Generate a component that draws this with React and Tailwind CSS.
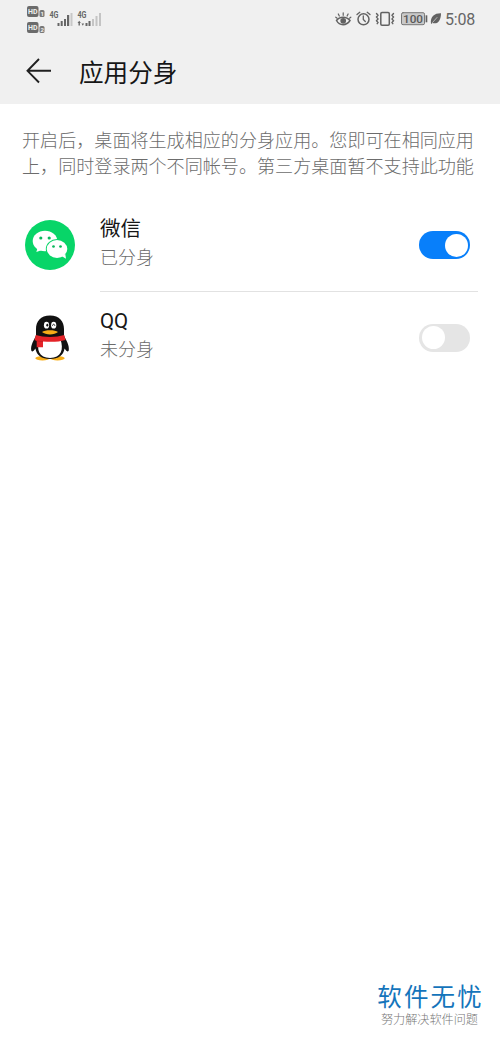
const HdBadge = ({ n }) => (
  <svg width="19" height="11" viewBox="0 0 19 11">
    <rect width="11.500" height="11" rx="2" fill="#6b6b6b" />
    <text x="1" y="8.300" fontSize="7.500" fontWeight="700" textLength="9.500" lengthAdjust="spacingAndGlyphs" fill="#f0f0f0">HD</text>
    <rect x="12.500" y="4" width="5" height="7" rx="1.500" fill="#777" />
    <text x="13.500" y="9.700" fontSize="6" fontWeight="700" fill="#f0f0f0">{n}</text>
  </svg>
);

const Signal = ({ weak }) => (
  <svg width="26" height="18" viewBox="0 0 26 18">
    <text x="0.500" y="8" fontSize="8.500" fontWeight="700" textLength="9" lengthAdjust="spacingAndGlyphs" fill="#666">4G</text>
    {weak ? (
      <g fill="#666">
        <path d="M0.500 13 2.200 10.800 3.900 13H2.900V15.500H1.500V13ZM4.500 13.500h2.600l-1.300 2.200Z" />
        <rect x="8.500" y="13" width="2" height="3" />
        <rect x="11.500" y="11" width="2" height="5" />
        <rect x="15" y="9" width="2" height="7" fill="#c4c4c4" />
        <rect x="18.500" y="6" width="2" height="10" fill="#c4c4c4" />
        <rect x="22" y="3" width="2" height="13" fill="#c4c4c4" />
      </g>
    ) : (
      <g fill="#666">
        <rect x="8.500" y="13" width="2" height="3" />
        <rect x="11.700" y="11" width="2" height="5" />
        <rect x="15" y="9" width="2" height="7" />
        <rect x="18" y="5" width="2.200" height="11" />
        <rect x="21.500" y="3" width="2" height="13" fill="#c8c8c8" />
      </g>
    )}
  </svg>
);

const StatusIcons = () => (
  <svg width="106" height="20" viewBox="335 9 106 20" fill="none" stroke="#626262" strokeWidth="1.5" strokeLinecap="round">
    <path d="M336.500 20.500c3-4.500 10-4.500 13.500 0c-3.500 5.500-10.500 5.500-13.500 0Z" />
    <circle cx="343.200" cy="20.800" r="2.100" fill="#626262" />
    <path d="M343.200 12.800v2.500M338.300 14l1 2M348.100 14l-1 2M335.800 17.200l1.300 1M350.800 17.200l-1.300 1" strokeWidth="1.200" />
    <circle cx="363.500" cy="19.300" r="5.500" />
    <path d="M363.300 16v3.500l2 2M357 14.600l2.800-2.300M370 14.600l-2.800-2.300" strokeWidth="1.300" />
    <rect x="380.800" y="12.500" width="8.500" height="12.700" rx="1.200" />
    <path d="M376.500 13.500l1.500 1.800-1.500 1.800 1.500 1.800-1.500 1.800 1.500 1.800-.8 1.200M393.500 13.500l-1.500 1.800 1.500 1.800-1.500 1.800 1.500 1.800-1.500 1.800.8 1.200" strokeWidth="1.400" />
    <rect x="401.500" y="12.700" width="23" height="12" rx="1.500" fill="#c9c9c9" stroke="#777" strokeWidth="1" />
    <rect x="425.600" y="15.300" width="1.700" height="7" fill="#626262" stroke="none" />
    <text x="403" y="22.900" fontSize="11.500" fontWeight="500" textLength="20" lengthAdjust="spacingAndGlyphs" fill="#595959" stroke="none">100</text>
    <path d="M431 24c-1-8 4-11 10-10.800c0 7-3 11.500-8.500 9.800Z" fill="#626262" stroke="none" />
    <path d="M432.500 22.500l4.500-5" stroke="#f0f0f0" strokeWidth=".6" />
  </svg>
);

const WeChat = () => (
  <svg width="50" height="50" viewBox="0 0 50 50">
    <circle cx="25" cy="25" r="25" fill="#08d568" />
    <path d="M12.500 27.700 11.400 32 17 30Z" fill="#fff" />
    <ellipse cx="20" cy="21" rx="12.300" ry="10.300" fill="#fff" />
    <ellipse cx="32" cy="29" rx="11.200" ry="9.900" fill="#08d568" />
    <path d="M36.500 36 41 38.700 40.300 34Z" fill="#fff" />
    <ellipse cx="32" cy="29" rx="10.300" ry="9" fill="#fff" />
    <g fill="#08b85b">
      <circle cx="15.800" cy="18" r="1.600" />
      <circle cx="24.200" cy="18" r="1.600" />
      <circle cx="28.500" cy="26.500" r="1.350" />
      <circle cx="35.500" cy="26.500" r="1.350" />
    </g>
  </svg>
);

const Penguin = () => (
  <svg width="50" height="50" viewBox="0 -2.500 50 50">
    <ellipse cx="17.500" cy="42.800" rx="7.200" ry="2.200" fill="#f7ad18" />
    <ellipse cx="32.500" cy="42.800" rx="7.200" ry="2.200" fill="#f7ad18" />
    <path d="M25 0C15.500 0 11 6 11 13.500V20C9 24.500 5.500 29.500 6.200 34.500c.4 2.500 2.200 1.500 4.200-1.500C11.500 39.500 16.500 43.500 25 43.500s13.500-4 14.600-10.500c2 3 3.800 4 4.200 1.500C44.500 29.500 41 24.500 39 20V13.500C39 6 34.500 0 25 0Z" fill="#111" />
    <path d="M14.500 24h21c3.500 10 .5 18.500-10.500 18.500S11 34 14.500 24Z" fill="#fff" />
    <path d="M10.800 19.500c8 2.500 20.400 2.500 28.400 0l1.300 5C34 26.500 26 26.500 18 26V31.800h-6.300V25.500L9.500 24.500Z" fill="#e42328" />
    <path d="M11.700 25.300c2 .5 3.500.6 6.300.7" fill="none" stroke="#b8161c" strokeWidth=".6" />
    <ellipse cx="21.500" cy="9.700" rx="2.600" ry="3.400" fill="#fff" />
    <ellipse cx="28.700" cy="9.700" rx="2.600" ry="3.400" fill="#fff" />
    <ellipse cx="22.300" cy="9.700" rx="1" ry="1.400" fill="#111" />
    <path d="M27.500 10.300c0-2 2.300-2 2.300 0" fill="none" stroke="#111" strokeWidth=".9" />
    <path d="M17 16.500c3-2.300 13-2.300 16 0c-3.500 3.200-12.500 3.200-16 0Z" fill="#f7ad18" />
  </svg>
);

const Toggle = ({ on }) => (
  <button
    role="switch"
    aria-checked={on}
    className={`flex h-7 w-[51px] shrink-0 items-center rounded-full px-[2.5px] ${on ? "justify-end bg-[#087ffa]" : "justify-start bg-[#e5e5e5]"}`}
  >
    <span className="h-[23px] w-[23px] rounded-full bg-white" />
  </button>
);

const AppRow = ({ icon, name, status, on, divider }) => (
  <div className={`flex pl-[25px] ${divider ? "h-[93px]" : "h-[92px]"}`}>
    <div className="flex w-[75px] items-center pb-px">{icon}</div>
    <div className={`mr-[22px] flex flex-1 items-center justify-between pr-2 ${divider ? "border-b border-[#e2e2e2]" : "pb-px"}`}>
      <div className="flex flex-col pb-1">
        <span className="h-[29px] text-[20.5px] leading-[29px] font-normal text-[#161616]">{name}</span>
        <span className="h-7 text-[18px] leading-7 font-light text-[#6c6c6c]">{status}</span>
      </div>
      <Toggle on={on} />
    </div>
  </div>
);

export default function App() {
  return (
    <div className="flex h-[1039px] w-[500px] flex-col overflow-hidden bg-white font-['Roboto','Noto_Sans_CJK_SC',sans-serif]">
      <header className="flex h-[104px] shrink-0 flex-col bg-[#f0f0f0]">
        <div className="flex h-[38px] items-center justify-between pr-[25px] pl-[27px]">
          <div className="flex items-center">
            <div className="flex w-[22px] flex-col gap-[5px]">
              <HdBadge n="1" />
              <HdBadge n="2" />
            </div>
            <div className="flex w-[56px] gap-[2px]">
              <Signal />
              <Signal weak />
            </div>
          </div>
          <div className="flex items-center gap-1">
            <StatusIcons />
            <span className="w-[30px] pt-px text-[16px] leading-5 tracking-[-0.2px] whitespace-nowrap text-[#666666]">5:08</span>
          </div>
        </div>
        <div className="flex h-[66px] items-center pl-[26px]">
          <svg width="26" height="26" viewBox="0 0 26 26" fill="none" stroke="#202020" strokeWidth="1.900">
            <path d="M13 1 1.500 12.800 13 24.500M1.500 12.800H25" />
          </svg>
          <h1 className="ml-[27px] pt-[5px] text-[24.6px] leading-9 font-normal text-[#161616]">应用分身</h1>
        </div>
      </header>
      <p className="mt-6 ml-[22px] text-[18.08px] leading-[26px] font-light whitespace-nowrap text-[#6c6c6c]">
        开启后，桌面将生成相应的分身应用。您即可在相同应用
        <br />
        上，同时登录两个不同帐号。第三方桌面暂不支持此功能
      </p>
      <main className="mt-[19px]">
        <AppRow icon={<WeChat />} name="微信" status="已分身" on divider />
        <AppRow icon={<Penguin />} name="QQ" status="未分身" on={false} />
      </main>
      <footer className="mt-auto mb-[9px] flex flex-col items-end pr-[19px]">
        <span className="mr-[-3px] h-[26px] text-[24.5px] leading-[27px] font-normal tracking-[2.2px] text-[#1474bb]">软件无忧</span>
        <span className="mr-[3px] h-[20px] text-[12.15px] leading-[20px] font-light text-[#777777]">努力解决软件问题</span>
      </footer>
    </div>
  );
}
